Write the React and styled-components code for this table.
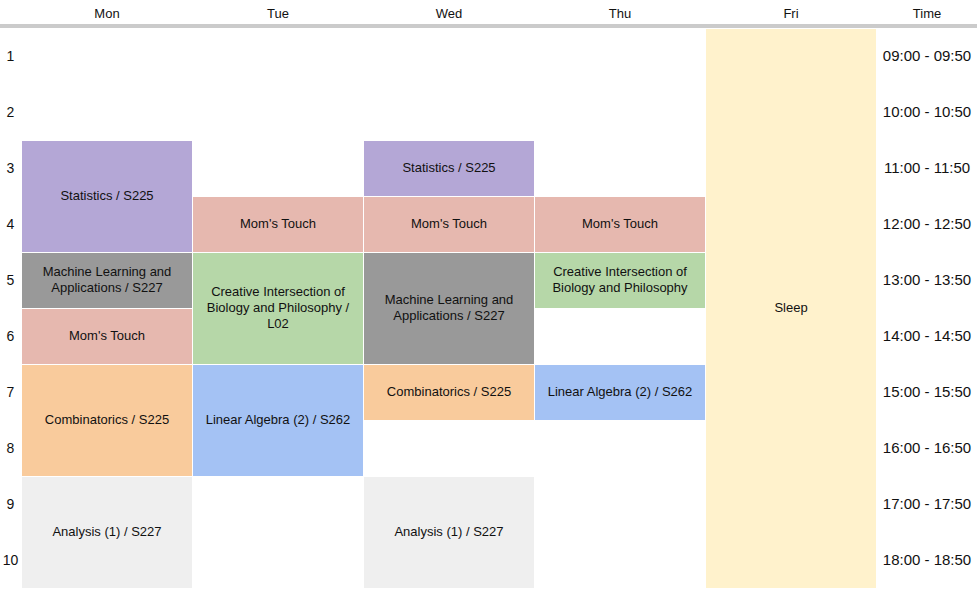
import React from "react";
import styled, { createGlobalStyle } from "styled-components";

const Global = createGlobalStyle`
  html, body { margin: 0; padding: 0; background: #fff; }
  body { font-family: "Liberation Sans", Arial, sans-serif; color: #111; }
`;

const COLS = "21px repeat(5, 170px) 100px";

const Page = styled.div`
  width: 977px;
`;

const HeaderRow = styled.div`
  display: grid;
  grid-template-columns: ${COLS};
  column-gap: 1px;
  height: 24px;
  border-bottom: 4px solid #cbcbcb;
`;

const HeadCell = styled.div`
  display: flex;
  align-items: center;
  justify-content: center;
  padding-top: 2px;
  font-size: 13px;
`;

const Body = styled.div`
  display: grid;
  grid-template-columns: ${COLS};
  grid-template-rows: repeat(10, 55px);
  gap: 1px;
  margin-top: 1px;
`;

const Period = styled.div`
  grid-column: 1;
  grid-row: ${(p) => p.$row};
  display: flex;
  align-items: center;
  justify-content: center;
  padding-bottom: 2px;
  font-size: 14px;
`;

const TimeLabel = styled.div`
  grid-column: 7;
  grid-row: ${(p) => p.$row};
  display: flex;
  align-items: center;
  justify-content: center;
  padding-bottom: 3px;
  font-size: 15px;
`;

const Block = styled.div`
  grid-column: ${(p) => p.$col + 1};
  grid-row: ${(p) => p.$row} / span ${(p) => p.$span || 1};
  background: ${(p) => p.$bg};
  display: flex;
  align-items: center;
  justify-content: center;
  text-align: center;
  padding: 0 5px 2px;
  font-size: 13px;
  line-height: 16px;
`;

const C = {
  stat: "#b4a7d6",
  mom: "#e6b8af",
  ml: "#999999",
  bio: "#b6d7a8",
  comb: "#f9cb9c",
  lin: "#a4c2f4",
  ana: "#efefef",
  sleep: "#fff2cc",
};

const blocks = [
  { col: 1, row: 3, span: 2, bg: C.stat, text: "Statistics / S225" },
  { col: 1, row: 5, span: 1, bg: C.ml, text: "Machine Learning and Applications / S227" },
  { col: 1, row: 6, span: 1, bg: C.mom, text: "Mom's Touch" },
  { col: 1, row: 7, span: 2, bg: C.comb, text: "Combinatorics / S225" },
  { col: 1, row: 9, span: 2, bg: C.ana, text: "Analysis (1) / S227" },
  { col: 2, row: 4, span: 1, bg: C.mom, text: "Mom's Touch" },
  { col: 2, row: 5, span: 2, bg: C.bio, text: "Creative Intersection of Biology and Philosophy / L02" },
  { col: 2, row: 7, span: 2, bg: C.lin, text: "Linear Algebra (2) / S262" },
  { col: 3, row: 3, span: 1, bg: C.stat, text: "Statistics / S225" },
  { col: 3, row: 4, span: 1, bg: C.mom, text: "Mom's Touch" },
  { col: 3, row: 5, span: 2, bg: C.ml, text: "Machine Learning and Applications / S227" },
  { col: 3, row: 7, span: 1, bg: C.comb, text: "Combinatorics / S225" },
  { col: 3, row: 9, span: 2, bg: C.ana, text: "Analysis (1) / S227" },
  { col: 4, row: 4, span: 1, bg: C.mom, text: "Mom's Touch" },
  { col: 4, row: 5, span: 1, bg: C.bio, text: "Creative Intersection of Biology and Philosophy" },
  { col: 4, row: 7, span: 1, bg: C.lin, text: "Linear Algebra (2) / S262" },
  { col: 5, row: 1, span: 10, bg: C.sleep, text: "Sleep" },
];

const days = ["Mon", "Tue", "Wed", "Thu", "Fri"];
const times = [
  "09:00 - 09:50",
  "10:00 - 10:50",
  "11:00 - 11:50",
  "12:00 - 12:50",
  "13:00 - 13:50",
  "14:00 - 14:50",
  "15:00 - 15:50",
  "16:00 - 16:50",
  "17:00 - 17:50",
  "18:00 - 18:50",
];

export default function App() {
  return (
    <Page>
      <Global />
      <HeaderRow>
        <HeadCell />
        {days.map((d) => (
          <HeadCell key={d}>{d}</HeadCell>
        ))}
        <HeadCell>Time</HeadCell>
      </HeaderRow>
      <Body>
        {times.map((t, i) => (
          <React.Fragment key={t}>
            <Period $row={i + 1}>{i + 1}</Period>
            <TimeLabel $row={i + 1}>{t}</TimeLabel>
          </React.Fragment>
        ))}
        {blocks.map((b, i) => (
          <Block key={i} $col={b.col} $row={b.row} $span={b.span} $bg={b.bg}>
            {b.text}
          </Block>
        ))}
      </Body>
    </Page>
  );
}
